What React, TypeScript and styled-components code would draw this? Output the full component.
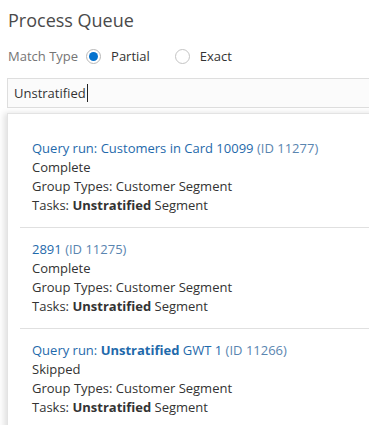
import React from "react";
import styled, { createGlobalStyle } from "styled-components";

const Global = createGlobalStyle`
  html, body {
    margin: 0;
    padding: 0;
    overflow: hidden;
    background: #ffffff;
  }
  body {
    font-family: "Open Sans", "Noto Sans", sans-serif;
    color: #333333;
  }
`;

const Page = styled.div`
  width: 369px;
  height: 425px;
  overflow: hidden;
  padding: 7px 0 0 7px;
  box-sizing: border-box;
`;

const Title = styled.h1`
  margin: 0 0 0 1px;
  font-size: 18px;
  font-weight: 400;
  line-height: 26px;
  color: #4a4a4a;
`;

const MatchRow = styled.div`
  display: flex;
  align-items: center;
  height: 22px;
  margin: 12px 0 0 1px;
  font-size: 13px;
  > span.label {
    color: #757575;
    margin-right: 8px;
  }
`;

const RadioOption = styled.label`
  display: flex;
  align-items: center;
  color: #333333;
  margin-right: 25px;
`;

const RadioCircle = styled.span<{ checked?: boolean }>`
  width: 15px;
  height: 15px;
  box-sizing: border-box;
  border-radius: 50%;
  border: 1px solid ${(p) => (p.checked ? "#b8b8b8" : "#c4c4c4")};
  background: #ffffff;
  margin-right: 10px;
  display: flex;
  align-items: center;
  justify-content: center;
  &::after {
    content: "";
    display: ${(p) => (p.checked ? "block" : "none")};
    width: 9px;
    height: 9px;
    border-radius: 50%;
    background: #0572ce;
  }
`;

const SearchBox = styled.div`
  margin: 11px -20px 0 0;
  height: 30px;
  box-sizing: border-box;
  border: 1px solid #dedede;
  background: #fbfbfb;
  display: flex;
  align-items: center;
  padding-left: 6px;
  font-size: 13px;
  color: #333333;
`;

const Caret = styled.span`
  display: inline-block;
  width: 1px;
  height: 18px;
  background: #222222;
  margin-left: 1px;
`;

const Results = styled.div`
  margin: 5px -20px 0 0;
  border: 1px solid #e3e3e3;
  border-right: none;
  box-shadow: -3px 0 6px rgba(0, 0, 0, 0.12);
  background: #ffffff;
  padding-top: 13px;
  height: 330px;
`;

const Item = styled.div`
  margin-left: 12px;
  padding: 12px 0 12px 12px;
  font-size: 13px;
  line-height: 19px;
  & + & {
    border-top: 1px solid #e0e0e0;
  }
`;

const ItemTitle = styled.div`
  color: #1f6aab;
  > span.id {
    color: #5a85b0;
  }
`;

const Line = styled.div`
  color: #333333;
`;

type Entry = {
  title: React.ReactNode;
  id: string;
  status: string;
};

const entries: Entry[] = [
  { title: "Query run: Customers in Card 10099", id: "11277", status: "Complete" },
  { title: "2891", id: "11275", status: "Complete" },
  {
    title: (
      <>
        Query run: <b>Unstratified</b> GWT 1
      </>
    ),
    id: "11266",
    status: "Skipped",
  },
];

export default function App() {
  return (
    <Page>
      <Global />
      <Title>Process Queue</Title>
      <MatchRow>
        <span className="label">Match Type</span>
        <RadioOption>
          <RadioCircle checked />
          Partial
        </RadioOption>
        <RadioOption>
          <RadioCircle />
          Exact
        </RadioOption>
      </MatchRow>
      <SearchBox>
        Unstratified
        <Caret />
      </SearchBox>
      <Results>
        {entries.map((e) => (
          <Item key={e.id}>
            <ItemTitle>
              {e.title} <span className="id">(ID {e.id})</span>
            </ItemTitle>
            <Line>{e.status}</Line>
            <Line>Group Types: Customer Segment</Line>
            <Line>
              Tasks: <b>Unstratified</b> Segment
            </Line>
          </Item>
        ))}
      </Results>
    </Page>
  );
}
